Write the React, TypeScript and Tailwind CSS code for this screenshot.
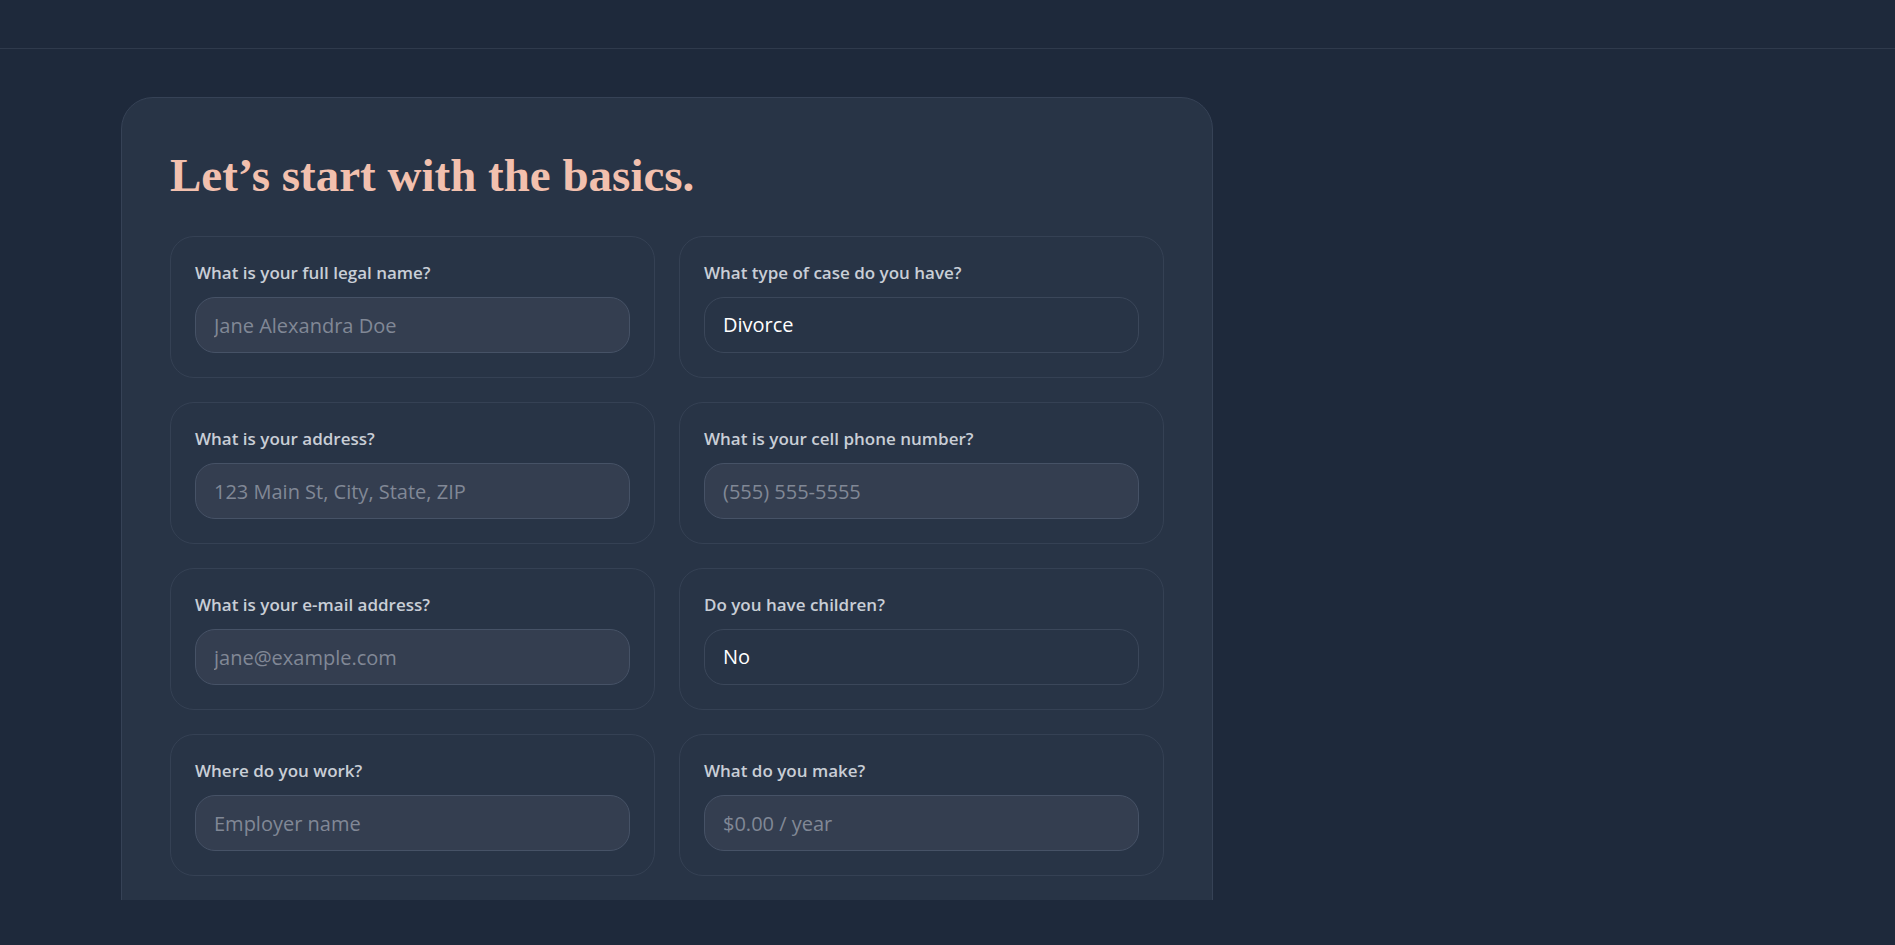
type Field = {
  label: string;
  placeholder?: string;
  value?: string;
  options?: string[];
};

const fields: Field[] = [
  { label: "What is your full legal name?", placeholder: "Jane Alexandra Doe" },
  { label: "What type of case do you have?", value: "Divorce", options: ["Divorce", "Custody", "Support", "Other"] },
  { label: "What is your address?", placeholder: "123 Main St, City, State, ZIP" },
  { label: "What is your cell phone number?", placeholder: "(555) 555-5555" },
  { label: "What is your e-mail address?", placeholder: "jane@example.com" },
  { label: "Do you have children?", value: "No", options: ["No", "Yes"] },
  { label: "Where do you work?", placeholder: "Employer name" },
  { label: "What do you make?", placeholder: "$0.00 / year" },
];

function FieldCard({ field }: { field: Field }) {
  return (
    <div className="rounded-3xl border border-[#354154] p-6">
      <label className="block mb-3 text-[17px] leading-6 font-semibold text-[#c9ced6]">
        {field.label}
      </label>
      {field.options ? (
        <select
          defaultValue={field.value}
          className="w-full h-[56px] appearance-none rounded-[20px] border border-[#3b475a] bg-transparent px-[18px] text-[20px] text-white outline-none"
        >
          {field.options.map((o) => (
            <option key={o} value={o} className="bg-[#283446]">
              {o}
            </option>
          ))}
        </select>
      ) : (
        <input
          type="text"
          placeholder={field.placeholder}
          className="w-full h-[56px] rounded-[20px] border border-[#465266] bg-[#343e50] px-[18px] text-[20px] text-white placeholder:text-[#818896] outline-none"
        />
      )}
    </div>
  );
}

export default function App() {
  return (
    <div
      className="h-screen flex flex-col bg-[#1e293b] overflow-hidden"
      style={{ fontFamily: '"Open Sans", "Noto Sans", sans-serif' }}
    >
      <header className="h-[49px] shrink-0 border-b border-[#2f3a4c]" />

      <main className="flex-1 min-h-0 overflow-hidden pt-12 pl-[121px]">
        <section className="w-[1092px] rounded-t-[32px] border border-[#364256] bg-[#283446] px-12 pt-[49px] pb-12">
          <h1 className="mb-[33px] font-['Liberation_Serif',serif] text-[47px] leading-[56px] font-bold text-[#f2c0ae]">
            Let’s start with the basics.
          </h1>
          <div className="grid grid-cols-2 gap-6">
            {fields.map((f) => (
              <FieldCard key={f.label} field={f} />
            ))}
          </div>
        </section>
      </main>

      <footer className="h-[45px] shrink-0" />
    </div>
  );
}
